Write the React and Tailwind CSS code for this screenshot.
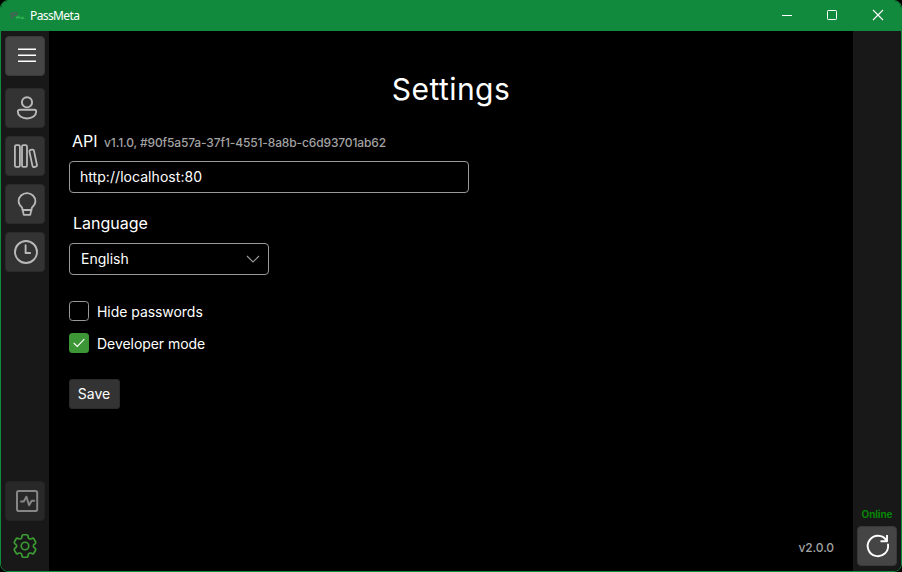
import React from "react";
import { HiOutlineCog6Tooth } from "react-icons/hi2";

function Glyph({ children, width = 1.9 }) {
  return (
    <svg viewBox="0 0 40 40" className="size-10 shrink-0" fill="none" stroke="currentColor" strokeWidth={width} strokeLinecap="round" strokeLinejoin="round">
      {children}
    </svg>
  );
}

function NavButton({ label, className = "border-[#2b2b2b] bg-[#333333] text-[#b9b9b9]", children }) {
  return (
    <button aria-label={label} className={`flex size-10 shrink-0 items-center justify-center rounded-[4px] border ${className}`}>
      {children}
    </button>
  );
}

function TitleBar() {
  return (
    <header className="flex h-[30px] shrink-0 items-center bg-[#128a3e] text-white">
      <svg viewBox="0 0 16 10" className="ml-[8px] h-[10px] w-4" fill="none" strokeWidth="1.1">
        <path d="M2 8 4.500 2M1 3.500C3 1.500 8 1 8 2.800S5 5 3.500 5" stroke="#5a5560" />
        <path d="M7 7.500 8 5.500 9 7 10 5.500V7.500M11 6.500h1.500M12 7.500h1.500l.5-2M14 7.500h1.500" stroke="#35b455" />
      </svg>
      <span className="ml-[5px] font-['Noto_Sans','Open_Sans',sans-serif] text-[12px] leading-4 tracking-[-0.6px]">PassMeta</span>
      <svg viewBox="0 0 136 30" className="ml-auto h-[30px] w-[136px]" fill="none" stroke="currentColor" strokeWidth="1">
        <path d="M17 14.500h10" />
        <rect x="62.500" y="9.500" width="9" height="9" rx="0.800" />
        <path d="m108 9 10 10M118 9l-10 10" strokeWidth="1.100" />
      </svg>
    </header>
  );
}

function Sidebar() {
  return (
    <nav className="flex w-12 shrink-0 flex-col bg-[#181818] px-1 pt-[5px] pb-[5px]">
      <NavButton label="Menu" className="border-[#393939] bg-[#454545] text-white">
        <Glyph width={1.4}>
          <path strokeLinecap="butt" d="M13 13.300h18M13 19.300h18M13 25.300h18" />
        </Glyph>
      </NavButton>
      <div className="mt-3 flex flex-col gap-2">
        <NavButton label="Account">
          <Glyph>
            <circle cx="22" cy="14.300" r="5.100" />
            <path d="M14.500 21.800h15a1.700 1.700 0 0 1 1.700 1.700c0 4.200-4 7-9.200 7s-9.200-2.800-9.200-7a1.700 1.700 0 0 1 1.700-1.700Z" />
          </Glyph>
        </NavButton>
        <NavButton label="Storage">
          <Glyph width={1.8}>
            <rect x="9.900" y="9.100" width="5" height="21.800" rx="1.500" />
            <rect x="17" y="9.100" width="5" height="21.800" rx="1.500" />
            <rect x="25.900" y="13.600" width="4.600" height="17.400" rx="1.400" transform="rotate(-12 28.200 22.300)" />
          </Glyph>
        </NavButton>
        <NavButton label="Generator">
          <Glyph width={1.8}>
            <path d="M18.800 30.900h6.400l1.700-7.200c1.900-1.700 3.500-3.500 3.500-6.400a8.400 8.200 0 0 0-16.800 0c0 2.900 1.600 4.700 3.500 6.400Z" />
            <path d="M17.600 26h8.800" />
          </Glyph>
        </NavButton>
        <NavButton label="History">
          <Glyph>
            <circle cx="21" cy="20" r="11" />
            <path d="M20.600 13.300v7.700h4.500" />
          </Glyph>
        </NavButton>
      </div>
      <div className="mt-auto flex flex-col gap-[5px]">
        <NavButton label="Logs" className="border-[#232323] bg-[#282828] text-[#868686]">
          <Glyph width={2}>
            <rect x="12" y="9.900" width="20.200" height="20.200" rx="1.800" />
            <path d="M16 20.500h2.700l2.700-4.800 2.700 8.500 2.600-4.400h2.500" />
          </Glyph>
        </NavButton>
        <NavButton label="Settings" className="border-transparent text-[#3b9c33]">
          <HiOutlineCog6Tooth className="size-[30px]" strokeWidth={1.35} />
        </NavButton>
      </div>
    </nav>
  );
}

function Checkbox({ checked, label }) {
  return (
    <div className="flex h-8 items-center gap-2">
      <span className={`flex size-5 items-center justify-center rounded-[3.5px] ${checked ? "bg-[#3d9635]" : "border border-[#999999]"}`}>
        {checked && (
          <svg viewBox="0 0 20 20" className="size-5" fill="none" stroke="white" strokeWidth="1.100">
            <path d="m4.700 10 3.600 3.500 7-7.300" />
          </svg>
        )}
      </span>
      <span className="pt-[2px] text-[14px] leading-5 tracking-[-0.05px]">{label}</span>
    </div>
  );
}

function SettingsPage() {
  return (
    <main className="flex min-w-0 flex-1 flex-col bg-black px-5 text-white">
      <h1 className="mt-[38px] text-center text-[30px] leading-10 tracking-[0.45px]">Settings</h1>
      <div className="mt-[22px] ml-[3px] flex h-5 items-baseline">
        <span className="text-[16px] leading-5">API</span>
        <span className="ml-[6.500px] text-[12px] leading-5 font-medium tracking-[-0.13px] text-[#a3a3a3]">v1.1.0, #90f5a57a-37f1-4551-8a8b-c6d93701ab62</span>
      </div>
      <div className="mt-[10px] flex h-8 w-[400px] items-center rounded-[4px] border border-[#999999] px-[10px] text-[14px] leading-5 tracking-[0.05px]">http://localhost:80</div>
      <div className="mt-5 ml-1 text-[16px] leading-5">Language</div>
      <div className="mt-[10px] flex h-8 w-[200px] items-center justify-between rounded-[4px] border border-[#999999] pr-[8px] pl-[11px] text-[14px] leading-5">
        <span>English</span>
        <svg viewBox="0 0 14 8" className="h-2 w-[14px]" fill="none" stroke="#999999" strokeWidth="1.100">
          <path d="m1 1 6 6 6-6" />
        </svg>
      </div>
      <div className="mt-5">
        <Checkbox label="Hide passwords" />
        <Checkbox checked label="Developer mode" />
      </div>
      <button className="mt-5 flex h-[30px] w-[51px] items-center justify-center rounded-[3px] border border-[#2b2b2b] bg-[#333333] pr-px text-[14px] leading-5">Save</button>
      <div className="mt-auto -mr-px mb-[13px] self-end text-[12px] leading-5 font-medium tracking-[-0.1px] text-[#a3a3a3]">v2.0.0</div>
    </main>
  );
}

export default function App() {
  return (
    <div className="h-[572px] w-[902px] bg-black font-['Inter','Liberation_Sans',sans-serif]">
      <div className="flex h-full flex-col overflow-hidden rounded-[8px] border border-[#128a3e]">
        <TitleBar />
        <div className="flex min-h-0 flex-1">
          <Sidebar />
          <SettingsPage />
          <aside className="flex w-12 shrink-0 flex-col items-center justify-end bg-[#181818] pb-[5px]">
            <span className="mb-[4px] text-[10px] leading-4 font-bold tracking-[-0.1px] text-[#078507]">Online</span>
            <NavButton label="Refresh" className="border-[#393939] bg-[#454545] text-white">
              <Glyph width={1.9}>
                <path d="M31 18.500A10.200 10.200 0 1 1 29.500 14.500" />
                <path strokeLinecap="butt" d="M30 9v6.300h-6.500" />
              </Glyph>
            </NavButton>
          </aside>
        </div>
      </div>
    </div>
  );
}
